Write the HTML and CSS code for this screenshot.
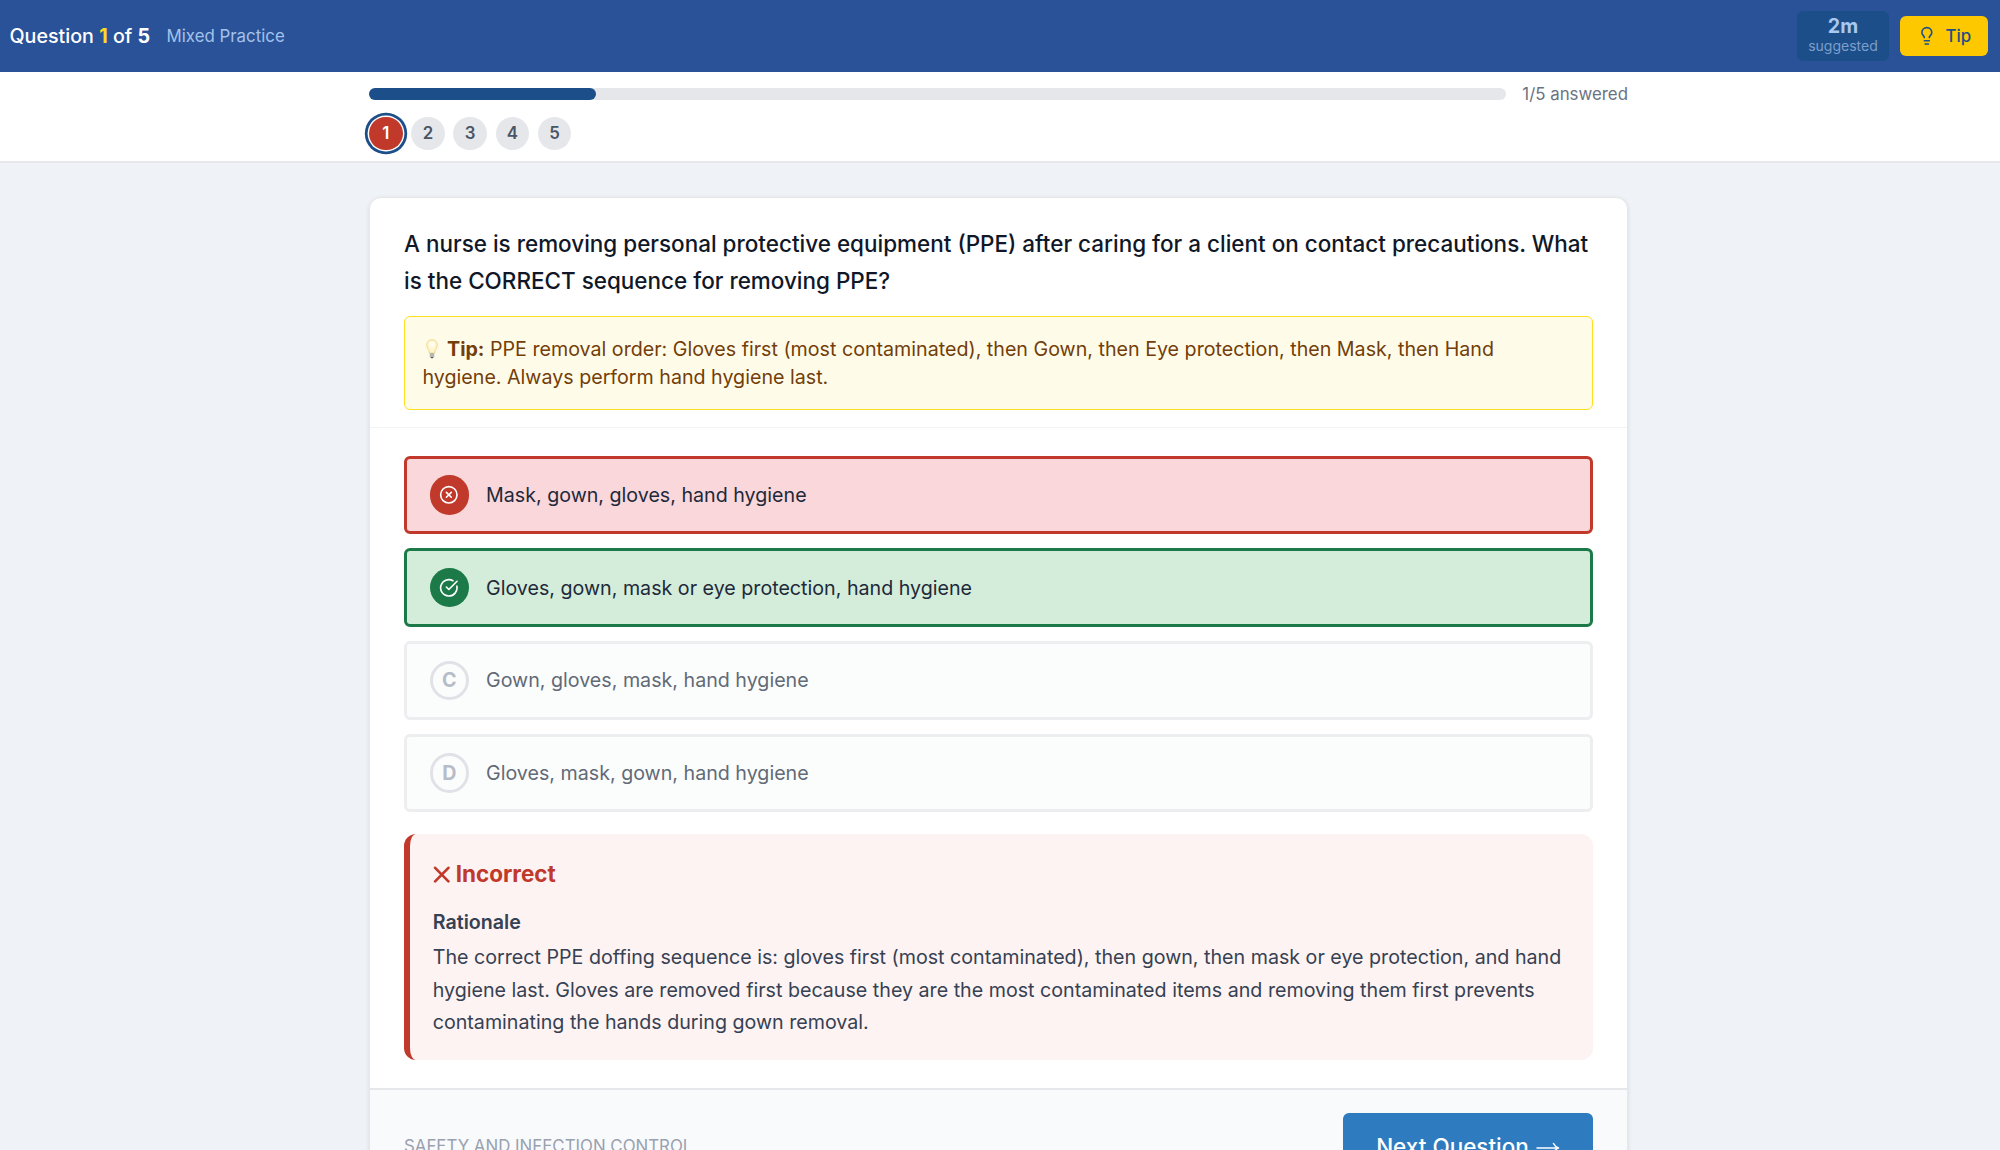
FILE: index.html
```html
<!DOCTYPE html>
<html lang="en">
<head>
<meta charset="UTF-8">
<meta name="viewport" content="width=device-width, initial-scale=1.0">
<title>Mixed Practice</title>
<link rel="stylesheet" href="styles.css">
</head>
<body>

<header class="topbar">
    <div class="topbar-left">
        <span class="counter">Question <b class="current">1</b> of <b>5</b></span>
        <span class="mode">Mixed Practice</span>
    </div>
    <div class="topbar-right">
        <div class="timer">
            <span class="timer-value">2m</span>
            <span class="timer-label">suggested</span>
        </div>
        <button class="tip-button">
            <svg class="tip-icon" viewBox="0 0 24 24" fill="none" stroke="currentColor" stroke-width="2" stroke-linecap="round" stroke-linejoin="round">
                <path d="M15 14c.2-1 .7-1.7 1.5-2.5 1-.9 1.5-2.2 1.5-3.5A6 6 0 0 0 6 8c0 1 .2 2.2 1.5 3.5.7.7 1.3 1.5 1.5 2.5"/>
                <path d="M9 18h6"/>
                <path d="M10 22h4"/>
            </svg>
            <span>Tip</span>
        </button>
    </div>
</header>

<nav class="progress">
    <div class="progress-row">
        <div class="track"><div class="fill" style="width: 20%"></div></div>
        <span class="answered">1/5 answered</span>
    </div>
    <div class="dots">
        <span class="dot active">1</span>
        <span class="dot">2</span>
        <span class="dot">3</span>
        <span class="dot">4</span>
        <span class="dot">5</span>
    </div>
</nav>

<main class="card">
    <section class="question">
        <h2>A nurse is removing personal protective equipment (PPE) after caring for a client on contact precautions. What is the CORRECT sequence for removing PPE?</h2>
        <div class="tip">
            <svg class="bulb" viewBox="0 0 12 20">
                <path d="M6 .8C2.9.8.7 3.1.7 6c0 3 2.2 4.2 2.8 8h5c.6-3.8 2.8-5 2.8-8C11.3 3.1 9.1.8 6 .8z" fill="#fff6cc" stroke="#f0d890" stroke-width="1"/>
                <ellipse cx="6" cy="5.500" rx="2.800" ry="3" fill="#fffdf2"/>
                <path d="M3.700 14h4.600v3.200L7.200 19H4.800l-1.100-1.800z" fill="#b9b8b0"/>
                <path d="M4.600 18h2.800L6.800 19.300H5.200z" fill="#55544f"/>
            </svg>
            <strong>Tip:</strong> PPE removal order: Gloves first (most contaminated), then Gown, then Eye protection, then Mask, then Hand hygiene. Always perform hand hygiene last.
        </div>
    </section>

    <section class="answers">
        <div class="option wrong">
            <span class="badge">
                <svg viewBox="0 0 24 24" fill="none" stroke="currentColor" stroke-width="2" stroke-linecap="round" stroke-linejoin="round">
                    <circle cx="12" cy="12" r="10"/>
                    <path d="m15 9-6 6"/>
                    <path d="m9 9 6 6"/>
                </svg>
            </span>
            <span>Mask, gown, gloves, hand hygiene</span>
        </div>
        <div class="option right">
            <span class="badge">
                <svg viewBox="0 0 24 24" fill="none" stroke="currentColor" stroke-width="2" stroke-linecap="round" stroke-linejoin="round">
                    <path d="M21.800 10A10 10 0 1 1 17 3.335"/>
                    <path d="m9 11 3 3L22 4"/>
                </svg>
            </span>
            <span>Gloves, gown, mask or eye protection, hand hygiene</span>
        </div>
        <div class="option muted">
            <span class="badge">C</span>
            <span>Gown, gloves, mask, hand hygiene</span>
        </div>
        <div class="option muted">
            <span class="badge">D</span>
            <span>Gloves, mask, gown, hand hygiene</span>
        </div>

        <div class="feedback">
            <h3>
                <svg class="cross" viewBox="0 0 16 16" fill="none" stroke="currentColor" stroke-width="2.500" stroke-linecap="round">
                    <path d="M2 1.700l12.500 12.800M14.500 1.700l-12.500 12.800"/>
                </svg>
                Incorrect
            </h3>
            <h4>Rationale</h4>
            <p>The correct PPE doffing sequence is: gloves first (most contaminated), then gown, then mask or eye protection, and hand hygiene last. Gloves are removed first because they are the most contaminated items and removing them first prevents contaminating the hands during gown removal.</p>
        </div>
    </section>

    <footer class="card-footer">
        <span class="category">Safety and Infection Control</span>
        <button class="next">
            Next Question
            <svg class="arrow" viewBox="0 0 24 14" fill="none" stroke="currentColor" stroke-width="1.500" stroke-linecap="round" stroke-linejoin="round">
                <path d="M1 7h21.500M17.500 2.500c1 2 2.500 3.500 5 4.500-2.500 1-4 2.500-5 4.500"/>
            </svg>
        </button>
    </footer>
</main>

</body>
</html>
```

FILE: styles.css
```css
* {
    box-sizing: border-box;
}
body {
    margin: 0;
    height: 1150px;
    overflow: hidden;
    background-color: #eff3f8;
    color: #1e293b;
    font-family: Inter, "Liberation Sans", sans-serif;
    font-size: 19.66px;
}
h2, h3, h4, p {
    margin: 0;
}
button {
    border: none;
    font-family: inherit;
}

/* Top bar */
.topbar {
    display: flex;
    justify-content: space-between;
    align-items: center;
    height: 72px;
    padding: 0 12px 1px 9.5px;
    background-color: #2a5298;
    color: #fff;
}
.topbar-left {
    display: flex;
    align-items: center;
    gap: 16.5px;
}
.counter {
    font-weight: 500;
}
.counter b {
    font-weight: 700;
}
.counter .current {
    color: #fddc17;
}
.mode {
    font-size: 16.85px;
    color: #a3c2ea;
}
.topbar-right {
    display: flex;
    align-items: center;
    gap: 11px;
}
.timer {
    display: flex;
    flex-direction: column;
    align-items: center;
    width: 92px;
    height: 50px;
    padding-top: 5px;
    border-radius: 6px;
    background-color: #1c4f8a;
    color: #a9c8ee;
}
.timer-value {
    font-weight: 700;
    line-height: 21px;
}
.timer-label {
    font-size: 14.04px;
    line-height: 17px;
    color: #7d9ecb;
}
.tip-button {
    display: flex;
    align-items: center;
    justify-content: center;
    gap: 9px;
    width: 88px;
    height: 40px;
    padding: 0;
    border-radius: 6px;
    background-color: #fdc800;
    color: #1c4f8a;
    font-size: 16.85px;
    font-weight: 500;
}
.tip-icon {
    width: 19.66px;
    height: 19.66px;
}

/* Progress */
.progress {
    height: 91px;
    padding: 11px 372px 0 369px;
    border-bottom: 2px solid #e5e7eb;
    background-color: #fff;
}
.progress-row {
    display: flex;
    align-items: center;
    gap: 16px;
    height: 22px;
}
.track {
    flex: 1;
    height: 11.5px;
    border-radius: 6px;
    background-color: #e5e7eb;
}
.fill {
    height: 100%;
    border-radius: 6px;
    background-color: #1c4f8a;
}
.answered {
    font-size: 16.85px;
    color: #6a7282;
}
.dots {
    display: flex;
    gap: 8.5px;
    margin-top: 11.5px;
}
.dot {
    display: flex;
    align-items: center;
    justify-content: center;
    width: 33.7px;
    height: 33.7px;
    border-radius: 50%;
    background-color: #e5e7eb;
    color: #4a5565;
    font-size: 16.85px;
    font-weight: 600;
}
.dot.active {
    background-color: #c0392b;
    color: #fff;
    box-shadow: 0 0 0 1.4px #fff, 0 0 0 4.2px #1c4f8a;
}

/* Question card */
.card {
    width: 1259px;
    margin: 34px 0 0 369px;
    border: 1.4px solid #e5e7eb;
    border-radius: 12px;
    background-color: #fff;
    box-shadow: 0 1px 4px rgba(0, 0, 0, 0.1);
}
.question {
    padding: 28px 34px 17px 34px;
    border-bottom: 1px solid #f3f4f6;
}
.question h2 {
    color: #101828;
    font-size: 22.47px;
    font-weight: 500;
    line-height: 36.7px;
}
.tip {
    margin-top: 16.6px;
    padding: 18px 17.5px 17.5px;
    border: 1.4px solid #ffdf20;
    border-radius: 6px;
    background-color: #fefce8;
    color: #733e0a;
    line-height: 28.1px;
}
.bulb {
    width: 12px;
    height: 20px;
    margin: 0 3.5px 0 3.5px;
    vertical-align: -3px;
}
.answers {
    padding: 28px 34px 28px 34px;
}
.option {
    display: flex;
    align-items: center;
    gap: 17px;
    height: 78.7px;
    margin-bottom: 14px;
    padding: 0 22.5px;
    border: 3px solid;
    border-radius: 6px;
}
.badge {
    display: flex;
    align-items: center;
    justify-content: center;
    width: 39.5px;
    height: 39.5px;
    border-radius: 50%;
    color: #fff;
    font-weight: 700;
}
.badge svg {
    width: 19.66px;
    height: 19.66px;
}
.option.wrong {
    border-color: #c0392b;
    background-color: #f9d7da;
}
.option.wrong .badge {
    background-color: #c0392b;
}
.option.right {
    border-color: #1b7a48;
    background-color: #d4edda;
}
.option.right .badge {
    background-color: #1b7a48;
}
.option.muted {
    border-color: #edeef0;
    background-color: #fbfdfc;
    color: #626a78;
}
.option.muted .badge {
    border: 3px solid #e0e2e7;
    color: #b7bcc8;
}

/* Answer feedback */
.feedback {
    height: 226px;
    margin-top: 22px;
    padding: 22.6px 22px 0 22.7px;
    border-left: 6px solid #c0392b;
    border-radius: 12px;
    background-color: #fdf3f2;
    color: #364153;
}
.feedback h3 {
    display: flex;
    align-items: center;
    gap: 6px;
    color: #c0392b;
    font-size: 22.47px;
    font-weight: 700;
    line-height: 34px;
}
.cross {
    width: 17px;
    height: 17px;
}
.feedback h4 {
    margin-top: 17.3px;
    font-size: 19.66px;
    font-weight: 600;
    line-height: 28px;
}
.feedback p {
    margin-top: 5px;
    line-height: 32.5px;
}

/* Card footer */
.card-footer {
    display: flex;
    align-items: center;
    justify-content: space-between;
    padding: 22.5px 34px;
    border-top: 2px solid #e5e7eb;
    background-color: #f9fafc;
}
.category {
    color: #99a1af;
    font-size: 16.85px;
    text-transform: uppercase;
}
.next {
    display: flex;
    align-items: center;
    justify-content: center;
    gap: 7px;
    width: 250px;
    height: 67px;
    padding: 0;
    border-radius: 6px;
    background-color: #2e7bc0;
    color: #fff;
    font-size: 22.47px;
    font-weight: 500;
}
.arrow {
    width: 24px;
    height: 14px;
    margin-top: 3px;
}
```
